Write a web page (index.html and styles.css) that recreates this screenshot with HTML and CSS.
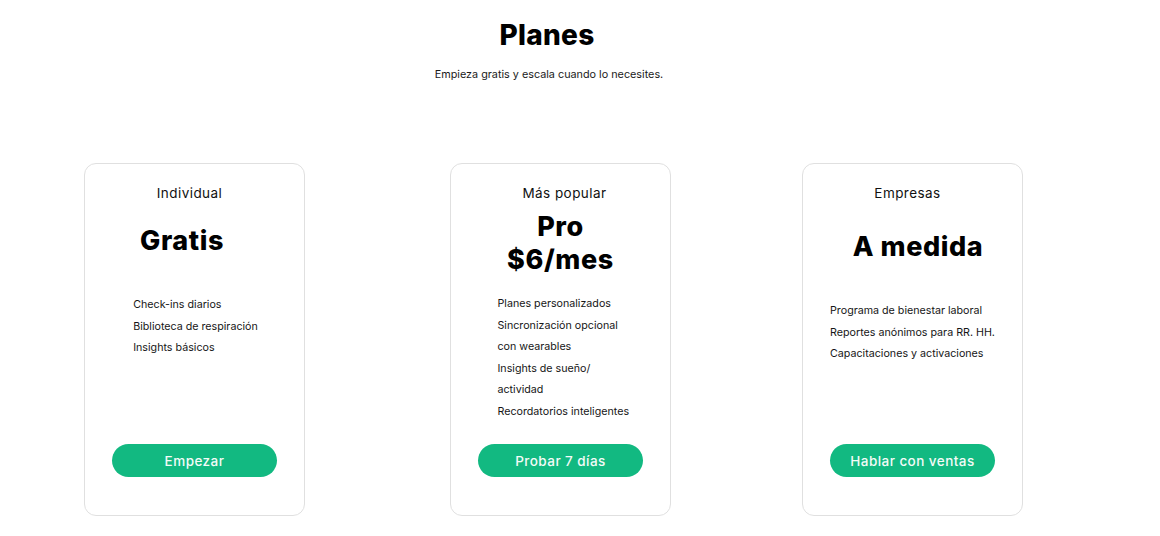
FILE: index.html
```html
<!DOCTYPE html>
<html lang="es">
<head>
<meta charset="utf-8">
<title>Planes</title>
<link rel="stylesheet" href="styles.css">
</head>
<body>
<section class="plans">
  <header class="plans__head">
    <h1 class="plans__title">Planes</h1>
    <p class="plans__sub">Empieza gratis y escala cuando lo necesites.</p>
  </header>
  <div class="plans__row">
    <article class="card card--one">
      <div class="card__label">Individual</div>
      <h2 class="card__title card__title--one">Gratis</h2>
      <ul class="card__list card__list--one">
        <li>Check-ins diarios</li>
        <li>Biblioteca de respiración</li>
        <li>Insights básicos</li>
      </ul>
      <button class="card__btn">Empezar</button>
    </article>
    <article class="card card--two">
      <div class="card__label card__label--two">Más popular</div>
      <h2 class="card__title card__title--two">Pro<br>$6/mes</h2>
      <ul class="card__list card__list--two">
        <li>Planes personalizados</li>
        <li>Sincronización opcional con wearables</li>
        <li>Insights de sueño/ actividad</li>
        <li>Recordatorios inteligentes</li>
      </ul>
      <button class="card__btn">Probar 7 días</button>
    </article>
    <article class="card card--three">
      <div class="card__label card__label--three">Empresas</div>
      <h2 class="card__title card__title--three">A medida</h2>
      <ul class="card__list card__list--three">
        <li>Programa de bienestar laboral</li>
        <li>Reportes anónimos para RR. HH.</li>
        <li>Capacitaciones y activaciones</li>
      </ul>
      <button class="card__btn">Hablar con ventas</button>
    </article>
  </div>
</section>
</body>
</html>
```
FILE: styles.css
```css
* { box-sizing: border-box; }
html, body { margin: 0; padding: 0; background: #fff; }
body {
  font-family: Inter, "Liberation Sans", sans-serif;
  color: #1a1a1a;
}
.plans { width: 1160px; }
.plans__head {
  width: 1096px;
  text-align: center;
}
.plans__title {
  margin: 18px 0 0;
  font-size: 28px;
  line-height: 34px;
  font-weight: 800;
  color: #000;
  letter-spacing: 0.3px;
  padding-right: 2px;
}
.plans__sub {
  margin: 15px 0 0;
  font-size: 10.8px;
  line-height: 16px;
  color: #1a1a1a;
  padding-left: 2px;
}
.plans__row {
  display: flex;
  align-items: flex-start;
  margin-top: 80px;
  padding-left: 84px;
}
.card {
  width: 221px;
  height: 353px;
  border: 1.5px solid #e0e0e0;
  border-radius: 12px;
  display: flex;
  flex-direction: column;
  align-items: center;
  padding: 19px 0 38px;
}
.card--two { margin-left: 145px; }
.card--three { margin-left: 131px; }
.card__label {
  font-size: 13.5px;
  line-height: 20px;
  font-weight: 400;
  letter-spacing: 0.45px;
  color: #111;
  padding-right: 10px;
}
.card__label--two { padding-right: 0; padding-left: 8px; }
.card__title {
  margin: 0;
  font-size: 27px;
  line-height: 33px;
  font-weight: 800;
  letter-spacing: 0.6px;
  color: #000;
  text-align: center;
}
.card__title--one { margin-top: 21px; padding-right: 25px; }
.card__title--two { margin-top: 7px; }
.card__title--three { margin-top: 27px; padding-left: 11px; }
.card__list {
  list-style: none;
  margin: 0;
  padding: 0;
  font-size: 10.7px;
  line-height: 21.5px;
  color: #161616;
}
.card__list--one { margin-top: 37px; padding-left: 2px; }
.card__list--two { margin-top: 17px; max-width: 142px; padding-left: 8px; }
.card__list--three { margin-top: 37px; }
.card__btn {
  margin-top: auto;
  width: 165px;
  height: 33px;
  border: 0;
  border-radius: 17px;
  background: #12b981;
  color: #f4fbf8;
  font-family: Inter, "Liberation Sans", sans-serif;
  font-size: 13.5px;
  font-weight: 500;
  letter-spacing: 0.45px;
  cursor: pointer;
}
```
